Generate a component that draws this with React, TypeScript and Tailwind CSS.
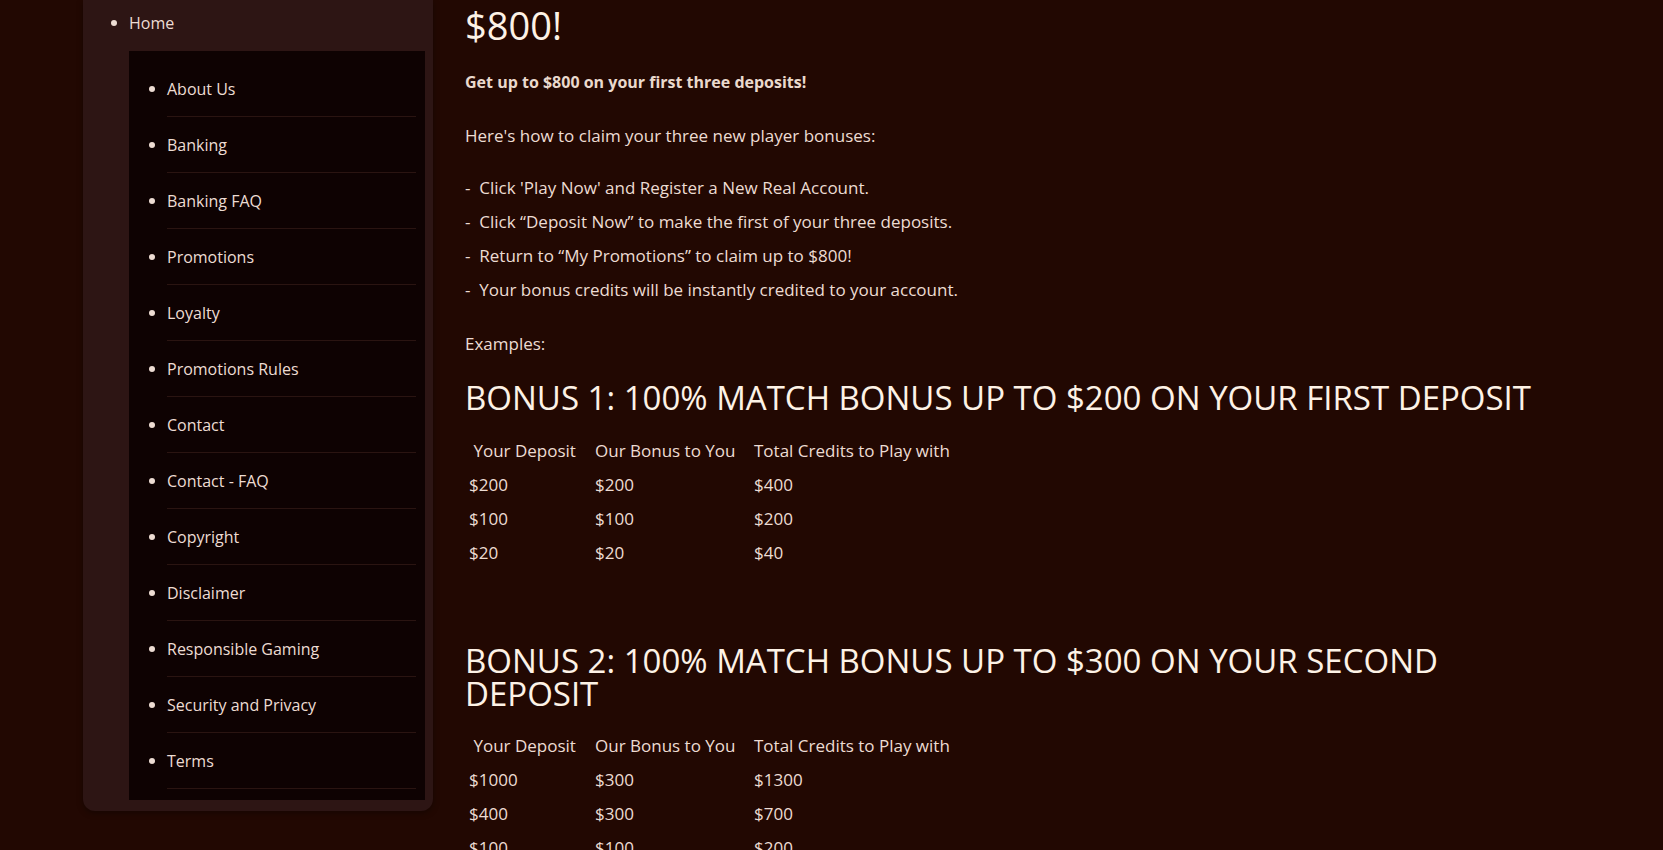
const navItems = [
  'About Us',
  'Banking',
  'Banking FAQ',
  'Promotions',
  'Loyalty',
  'Promotions Rules',
  'Contact',
  'Contact - FAQ',
  'Copyright',
  'Disclaimer',
  'Responsible Gaming',
  'Security and Privacy',
  'Terms',
];

const steps = [
  "Click 'Play Now' and Register a New Real Account.",
  'Click \u201cDeposit Now\u201d to make the first of your three deposits.',
  'Return to \u201cMy Promotions\u201d to claim up to $800!',
  'Your bonus credits will be instantly credited to your account.',
];

const bonuses = [
  {
    title: 'BONUS 1: 100% MATCH BONUS UP TO $200 ON YOUR FIRST DEPOSIT',
    rows: [
      ['$200', '$200', '$400'],
      ['$100', '$100', '$200'],
      ['$20', '$20', '$40'],
    ],
  },
  {
    title: 'BONUS 2: 100% MATCH BONUS UP TO $300 ON YOUR SECOND DEPOSIT',
    rows: [
      ['$1000', '$300', '$1300'],
      ['$400', '$300', '$700'],
      ['$100', '$100', '$200'],
    ],
  },
];

function Dot() {
  return <span className="block h-[6px] w-[6px] shrink-0 rounded-full bg-[#eddcd3]" />;
}

function Sidebar() {
  return (
    <aside className="ml-[83px] w-[350px] shrink-0 self-start rounded-b-[12px] bg-[#2d1514] pb-[11px] pr-[8px] shadow-[0_2px_6px_rgba(0,0,0,0.35)]">
      <div className="flex h-[46px] items-center pl-[28px]">
        <Dot />
        <span className="ml-[12px] text-[16px] text-[#eddcd3]">Home</span>
      </div>
      <ul className="ml-[46px] mt-[5px] bg-[#0e0202] pb-[11px] pl-[20px] pr-[9px] pt-[10px]">
        {navItems.map((item) => (
          <li key={item} className="flex">
            <div className="flex h-[55px] items-center">
              <Dot />
            </div>
            <div className="ml-[12px] flex h-[56px] flex-1 items-center border-b border-[#2a1411] text-[16px] text-[#eddcd3]">
              {item}
            </div>
          </li>
        ))}
      </ul>
    </aside>
  );
}

function BonusTable({ rows, first }: { rows: string[][]; first: boolean }) {
  return (
    <table className={(first ? 'mt-[20px]' : 'mt-[19px]') + ' border-collapse text-[17px] text-[#eddcd3]'}>
      <tbody>
        <tr className="h-[34px]">
          <td className="w-[126px] pl-[4px]">{'\u00a0Your Deposit'}</td>
          <td className="w-[159px] pl-[4px]">Our Bonus to You</td>
          <td className="pl-[4px]">Total Credits to Play with</td>
        </tr>
        {rows.map((row, i) => (
          <tr key={i} className="h-[34px]">
            {row.map((cell, j) => (
              <td key={j} className="pl-[4px]">{cell}</td>
            ))}
          </tr>
        ))}
      </tbody>
    </table>
  );
}

export default function App() {
  return (
    <div
      className="flex h-[850px] overflow-hidden bg-[#220802] text-[#eddcd3]"
      style={{ fontFamily: '"Open Sans", "Noto Sans", sans-serif' }}
    >
      <Sidebar />
      <main className="ml-[32px] w-[1095px]">
        <h1 className="mt-[6px] text-[38px] leading-[38px] text-[#fdf2e6]">$800!</h1>
        <p className="mt-[21px] text-[16px] font-bold leading-[34px] text-[#ead9cd]">
          Get up to $800 on your first three deposits!
        </p>
        <p className="mt-[20px] text-[17px] leading-[34px]">Here's how to claim your three new player bonuses:</p>
        <div className="mt-[18px] text-[17px] leading-[34px]">
          {steps.map((s) => (
            <p key={s} className="whitespace-pre">{'-  ' + s}</p>
          ))}
        </div>
        <p className="mt-[20px] text-[17px] leading-[34px]">Examples:</p>
        {bonuses.map((b, i) => (
          <section key={b.title}>
            <h2 className={(i === 0 ? 'mt-[20px]' : 'mt-[74px]') + ' text-[33px] leading-[33px] text-[#fdf2e6]'}>
              {b.title}
            </h2>
            <BonusTable rows={b.rows} first={i === 0} />
          </section>
        ))}
      </main>
    </div>
  );
}
